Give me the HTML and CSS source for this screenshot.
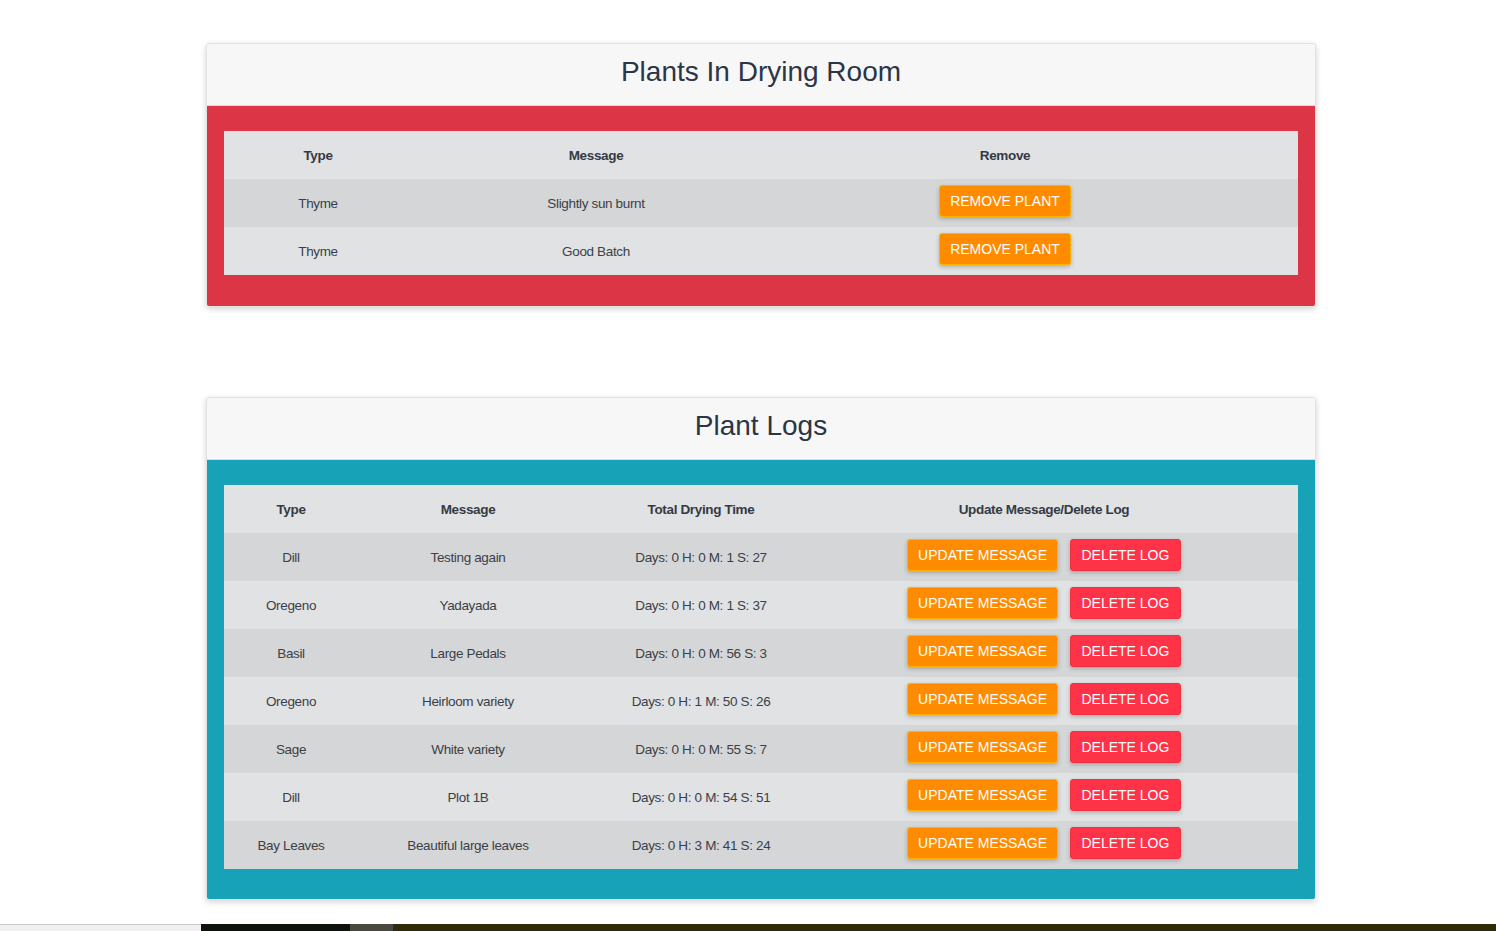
FILE: index.html
```html
<!DOCTYPE html>
<html lang="en">
<head>
<meta charset="utf-8">
<title>Drying Room</title>
<link rel="stylesheet" href="styles.css">
</head>
<body>
<main class="page">
  <section class="card">
    <header class="card-header"><h2 class="card-title">Plants In Drying Room</h2></header>
    <div class="card-body danger">
      <table class="grid grid-rooms">
        <colgroup><col class="c-r1"><col class="c-r2"><col class="c-r3"><col></colgroup>
        <thead><tr><th>Type</th><th>Message</th><th>Remove</th><th></th></tr></thead>
        <tbody>
          <tr><td>Thyme</td><td>Slightly sun burnt</td><td><button class="btn btn-orange">Remove Plant</button></td><td></td></tr>
          <tr><td>Thyme</td><td>Good Batch</td><td><button class="btn btn-orange">Remove Plant</button></td><td></td></tr>
        </tbody>
      </table>
    </div>
  </section>

  <section class="card">
    <header class="card-header"><h2 class="card-title">Plant Logs</h2></header>
    <div class="card-body info">
      <table class="grid grid-logs">
        <colgroup><col class="c-l1"><col class="c-l2"><col class="c-l3"><col class="c-l4"><col></colgroup>
        <thead><tr><th>Type</th><th>Message</th><th>Total Drying Time</th><th>Update Message/Delete Log</th><th></th></tr></thead>
        <tbody>
          <tr><td>Dill</td><td>Testing again</td><td>Days: 0 H: 0 M: 1 S: 27</td><td><div class="actions"><button class="btn btn-orange">Update Message</button><button class="btn btn-red">Delete Log</button></div></td><td></td></tr>
          <tr><td>Oregeno</td><td>Yadayada</td><td>Days: 0 H: 0 M: 1 S: 37</td><td><div class="actions"><button class="btn btn-orange">Update Message</button><button class="btn btn-red">Delete Log</button></div></td><td></td></tr>
          <tr><td>Basil</td><td>Large Pedals</td><td>Days: 0 H: 0 M: 56 S: 3</td><td><div class="actions"><button class="btn btn-orange">Update Message</button><button class="btn btn-red">Delete Log</button></div></td><td></td></tr>
          <tr><td>Oregeno</td><td>Heirloom variety</td><td>Days: 0 H: 1 M: 50 S: 26</td><td><div class="actions"><button class="btn btn-orange">Update Message</button><button class="btn btn-red">Delete Log</button></div></td><td></td></tr>
          <tr><td>Sage</td><td>White variety</td><td>Days: 0 H: 0 M: 55 S: 7</td><td><div class="actions"><button class="btn btn-orange">Update Message</button><button class="btn btn-red">Delete Log</button></div></td><td></td></tr>
          <tr><td>Dill</td><td>Plot 1B</td><td>Days: 0 H: 0 M: 54 S: 51</td><td><div class="actions"><button class="btn btn-orange">Update Message</button><button class="btn btn-red">Delete Log</button></div></td><td></td></tr>
          <tr><td>Bay Leaves</td><td>Beautiful large leaves</td><td>Days: 0 H: 3 M: 41 S: 24</td><td><div class="actions"><button class="btn btn-orange">Update Message</button><button class="btn btn-red">Delete Log</button></div></td><td></td></tr>
        </tbody>
      </table>
    </div>
  </section>
</main>
<footer class="strip">
  <div class="strip-a"></div>
  <div class="strip-b"></div>
  <div class="strip-c"></div>
  <div class="strip-d"></div>
</footer>
</body>
</html>
```

FILE: styles.css
```css
* { box-sizing: border-box; }
html, body { margin: 0; padding: 0; }
body {
  background: #ffffff;
  font-family: "Liberation Sans", Arial, sans-serif;
  color: #333842;
  height: 931px;
  overflow: hidden;
  display: flex;
  flex-direction: column;
}
.page {
  flex: 1;
  display: flex;
  flex-direction: column;
  align-items: flex-start;
  padding-top: 43px;
  padding-left: 206px;
  gap: 90px;
}
.card {
  width: 1110px;
  border: 1px solid #e2e2e2;
  border-radius: 3px;
  background: #f7f7f7;
  box-shadow: 0 2px 6px rgba(0,0,0,0.18);
  overflow: hidden;
}
.card-header {
  height: 62px;
  display: flex;
  align-items: center;
  justify-content: center;
  border-bottom: 1px solid #dcdcdc;
  background: #f7f7f7;
}
.card-title {
  margin: 0;
  font-weight: 400;
  font-size: 28px;
  color: #2a3547;
  padding-bottom: 5px;
}
.card-body {
  padding: 25px 17px 31px 17px;
}
.card-body.danger { background: #dc3545; }
.card-body.info { background: #17a2b8; padding-bottom: 30px; }

.grid {
  width: 100%;
  border-collapse: collapse;
  background: #e1e2e4;
  font-size: 13.5px;
  letter-spacing: -0.35px;
  table-layout: fixed;
}
.grid th, .grid td {
  height: 48px;
  padding: 0;
  text-align: center;
  vertical-align: middle;
}
.grid th { font-weight: 700; color: #343a44; }
.grid td { color: #3b3f46; }
.grid tbody tr:nth-child(odd) { background: #d5d6d8; }

.c-r1 { width: 188px; }
.c-r2 { width: 368px; }
.c-r3 { width: 450px; }

.c-l1 { width: 134px; }
.c-l2 { width: 220px; }
.c-l3 { width: 246px; }
.c-l4 { width: 440px; }

.actions {
  display: flex;
  justify-content: center;
  gap: 12px;
}
.btn {
  font-family: "Liberation Sans", Arial, sans-serif;
  font-size: 14px;
  letter-spacing: 0;
  text-transform: uppercase;
  color: #ffffff;
  border-radius: 3px;
  padding: 0 10px;
  height: 32px;
  line-height: 30px;
  cursor: pointer;
  box-shadow: 0 2px 4px rgba(0,0,0,0.22);
  position: relative;
  top: -2px;
}
.btn-orange {
  background: #ff8c00;
  border: 1px solid #ffb300;
}
.btn-red {
  background: #ff3347;
  border: 1px solid #f2313f;
  padding: 0 10.5px;
}

.strip {
  height: 7px;
  display: flex;
  flex: none;
}
.strip-a { width: 201px; background: #f0f0f0; border-top: 1px solid #c9c9c9; }
.strip-b { width: 149px; background: #0e140d; }
.strip-c { width: 45px; background: #4a493d; border-right: 2px solid #2a2a22; }
.strip-d { flex: 1; background: #2f2b09; }
```
